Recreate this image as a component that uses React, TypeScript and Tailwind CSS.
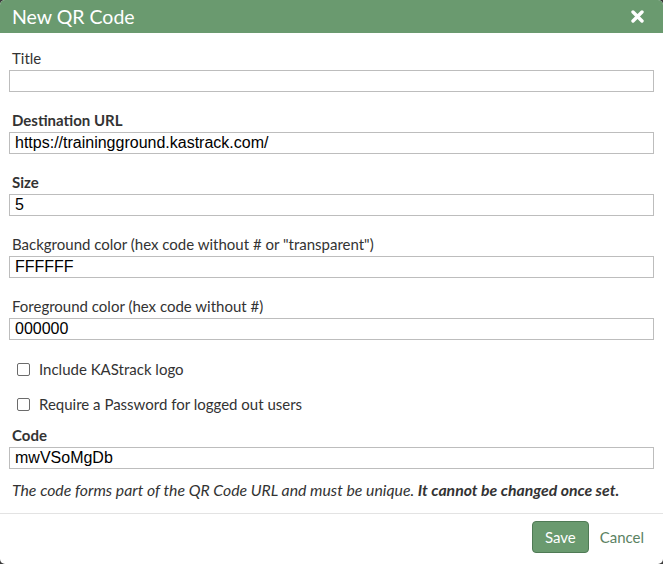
import type { ReactNode } from "react";

const labelFont = { fontFamily: "Lato, 'Noto Sans', sans-serif" };

function Field({
  label,
  value,
  bold,
}: {
  label: string;
  value?: string;
  bold?: boolean;
}) {
  return (
    <div className="flex flex-col">
      <label
        className={
          "pl-[3px] text-[15px] leading-[20px] text-[#333] " +
          (bold ? "font-bold" : "")
        }
      >
        {label}
      </label>
      <input
        readOnly
        value={value ?? ""}
        className="mt-[2px] h-[22px] w-full border border-[#bdbdbd] bg-white px-[5px] text-[16px] leading-[20px] text-black outline-none"
        style={{ fontFamily: "'Liberation Sans', Arial, sans-serif" }}
      />
    </div>
  );
}

function Check({ children }: { children: ReactNode }) {
  return (
    <label className="flex h-[20px] items-center pl-[8px] text-[15px] text-[#333]">
      <span className="mr-[9px] h-[13px] w-[13px] rounded-[2px] border border-[#6b6b6b] bg-white" />
      {children}
    </label>
  );
}

export default function App() {
  return (
    <div className="h-[564px] w-[663px] bg-[#3b3b3b]" style={labelFont}>
      <div className="flex h-full flex-col overflow-hidden rounded-[5px] bg-white">
        <div className="flex h-[33px] shrink-0 items-center justify-between bg-[#6a9a6f] pl-[12px] pr-[19px]">
          <h1 className="text-[19.5px] leading-none text-white">New QR Code</h1>
          <svg width="13" height="13" viewBox="0 0 13 13" aria-label="Close">
            <path
              d="M2 2 L11 11 M11 2 L2 11"
              stroke="white"
              strokeWidth="3.4"
              strokeLinecap="round"
            />
          </svg>
        </div>

        <div className="flex flex-col px-[9px] pt-[15px]">
          <div className="flex flex-col gap-[18px]">
            <Field label="Title" />
            <Field label="Destination URL" bold value="https://trainingground.kastrack.com/" />
            <Field label="Size" bold value="5" />
            <Field
              label={'Background color (hex code without # or "transparent")'}
              value="FFFFFF"
            />
            <Field label="Foreground color (hex code without #)" value="000000" />
          </div>

          <div className="mt-[19px] flex flex-col gap-[15px]">
            <Check>Include KAStrack logo</Check>
            <Check>Require a Password for logged out users</Check>
          </div>

          <div className="mt-[11px]">
            <Field label="Code" bold value="mwVSoMgDb" />
          </div>

          <p className="mt-[11px] pl-[3px] text-[15.8px] italic leading-[20px] text-[#333]">
            The code forms part of the QR Code URL and must be unique.{" "}
            <b>It cannot be changed once set.</b>
          </p>
        </div>

        <div className="mt-[13px] flex items-center justify-end gap-[11px] border-t border-[#e3e3e3] pr-[19px] pt-[7px]">
          <button className="h-[32px] rounded-[4px] border border-[#4f7a55] bg-[#6a9a6f] px-[12px] text-[15px] text-white">
            Save
          </button>
          <button className="text-[15px] text-[#5b8262]">Cancel</button>
        </div>
      </div>
    </div>
  );
}
